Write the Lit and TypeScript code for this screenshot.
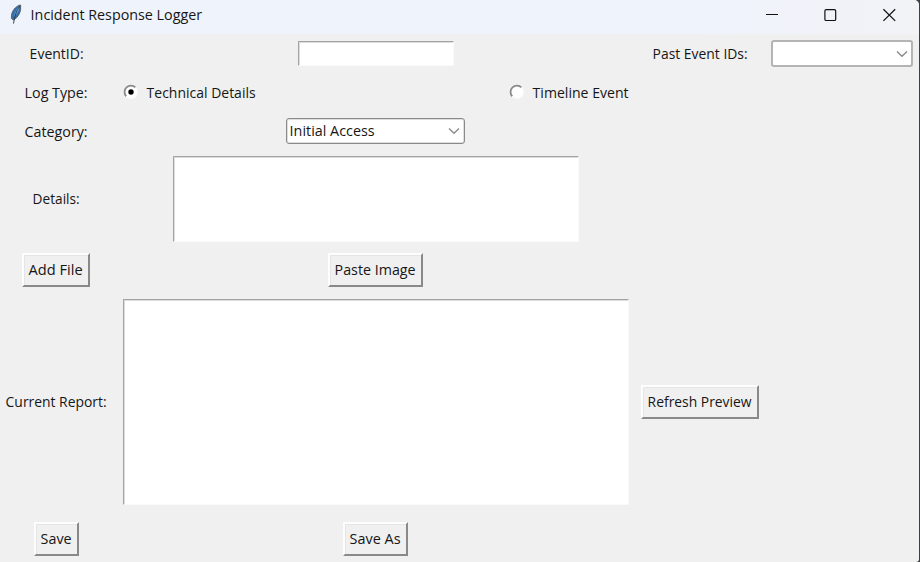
import { LitElement, html, css, svg } from "lit";
import { customElement, property } from "lit/decorators.js";

@customElement("fit-text")
class FitText extends LitElement {
  @property() text = "";
  @property({ type: Number }) width = 50;
  static styles = css`
    :host { display: inline-block; flex: none; font-size: 15.2px; }
    svg { display: block; height: 22px; overflow: visible; }
    text { font-family: "Open Sans", "Noto Sans", sans-serif; fill: #161616; }
  `;
  render() {
    return html`<svg width=${this.width} height="22">
      ${svg`<text x="-0.4" y="16" textLength=${this.width} lengthAdjust="spacingAndGlyphs">${this.text}</text>`}
    </svg>`;
  }
}

@customElement("tk-button")
class TkButton extends LitElement {
  @property() text = "";
  @property({ type: Number }) width = 50;
  static styles = css`
    :host { display: inline-block; }
    button {
      display: flex; align-items: center; justify-content: center;
      box-sizing: border-box; height: 34px; margin: 0 1px 0 0; padding: 0 5px;
      background: #f0f0f0; border: 2px solid; border-color: #fdfdfd #898989 #898989 #fdfdfd;
      box-shadow: inset 1px 1px #e5e5e5;
    }
  `;
  render() {
    return html`<button><fit-text .text=${this.text} .width=${this.width}></fit-text></button>`;
  }
}

@customElement("tk-combo")
class TkCombo extends LitElement {
  @property() text = "";
  static styles = css`
    :host { display: block; }
    .box {
      display: flex; align-items: center; justify-content: space-between;
      box-sizing: border-box; height: 27px; padding: 0 3px 0 2px;
      background: #fff; border: 2px solid #b4b4b4; border-radius: 3px;
    }
    .dark { height: 26px; border: 1px solid #8a8a8a; padding: 0 4px 0 3px; box-shadow: inset 0 0 0 1px #dedede; }
    .arrow { margin-left: auto; }
  `;
  render() {
    return html`<div class="box ${this.text ? "dark" : ""}">
      ${this.text ? html`<fit-text .text=${this.text} .width=${85}></fit-text>` : ""}
      <svg class="arrow" width="12" height="8" viewBox="0 0 12 8" fill="none" stroke="#8c8c8c" stroke-width="1.4"><path d="M1 1.5 6 6.3 11 1.5" /></svg>
    </div>`;
  }
}

@customElement("tk-radio")
class TkRadio extends LitElement {
  @property() text = "";
  @property({ type: Number }) width = 100;
  @property({ type: Boolean }) checked = false;
  static styles = css`
    :host { display: flex; align-items: center; gap: 8px; }
    .dial { display: block; margin-top: -2px; }
  `;
  render() {
    return html`<svg class="dial" width="16" height="16" viewBox="0 0 16 16" fill="none">
        <circle cx="8" cy="8" r="6.2" fill="#fff" />
        <path d="M3.3 12.3A6.2 6.2 0 0 1 12.5 3.5" stroke="#8a8a8a" stroke-width="1.8" />
        <path d="M12.5 3.5A6.3 6.3 0 0 1 3.3 12.3" stroke="#fcfcfc" stroke-width="1.4" />
        ${this.checked ? svg`<circle cx="8" cy="8" r="2.7" fill="#000" />` : ""}
      </svg><fit-text .text=${this.text} .width=${this.width}></fit-text>`;
  }
}

@customElement("app-root")
class AppRoot extends LitElement {
  static styles = css`
    :host { display: block; width: 920px; height: 562px; overflow: hidden; background: #3c3f43; }
    .window {
      box-sizing: border-box; width: 919px; height: 562px; overflow: hidden;
      background: #f0f0f0; border-radius: 0 5px 3px 0;
    }
    .title {
      display: flex; align-items: center; height: 34px; padding-left: 8px; box-sizing: border-box;
      background: linear-gradient(90deg, #eff3fb 75%, #f2f2f7);
    }
    .feather { display: block; margin: -6px 7px 0 0; }
    .name { margin-top: -4px; font-size: 14.8px; }
    .controls { display: block; margin: -4px 23px 0 auto; }
    .form {
      display: grid; grid-template-columns: 113px 526px 123px 160px;
      grid-template-rows: 39px 39px 39px 96px 46px 217px 58px;
      place-items: center;
    }
    .c1 { grid-column: 1; }
    .c2 { grid-column: 2; }
    .c3 { grid-column: 3; }
    .c4 { grid-column: 4; }
    .field {
      box-sizing: border-box; display: block; margin: 0; padding: 2px; resize: none; outline: 0;
      background: #fff; border: 1px solid; border-radius: 0;
      border-color: #a4a4a4 #fafafa #fafafa #a4a4a4;
      box-shadow: inset 1px 1px #dcdcdc;
    }
    .entry { width: 156px; height: 25px; }
    .details { width: 406px; height: 86px; }
    .report { width: 506px; height: 206px; }
    .past { width: 142px; }
    .category { width: 179px; margin: 0 1px 1px 0; }
    .radios { width: 506px; display: flex; justify-content: space-between; }
  `;
  private label(text: string, width: number, col = "c1") {
    return html`<fit-text class=${col} .text=${text} .width=${width}></fit-text>`;
  }
  private button(text: string, width: number, col: string) {
    return html`<tk-button class=${col} .text=${text} .width=${width}></tk-button>`;
  }
  render() {
    return html`<div class="window">
      <div class="title">
        <svg class="feather" width="16" height="22" viewBox="0 0 16 22">
          <path d="M12.6 2C9 2.6 5.2 6 3.8 10.8L3.3 15.3 5.3 17C9 15.4 12 11 12.6 6.5Z" fill="#3470b0" stroke="#59616b" stroke-width="1" />
          <path d="M11 3.6C8.5 6 7 9.3 6 13.5L9 10.5C10.6 8 11.5 6 11 3.6Z" fill="#69a9e5" />
          <path d="M11.8 3C8.6 7 6.6 13 5.5 20.6" fill="none" stroke="#2c3846" stroke-width=".9" />
        </svg>
        <fit-text class="name" text="Incident Response Logger" .width=${171.5}></fit-text>
        <svg class="controls" width="131" height="14" viewBox="0 0 131 14" fill="none" stroke="#111" stroke-width="1.2">
          <path d="M1 6.5H13" />
          <rect x="59.9" y="1.7" width="10.8" height="10.8" rx="1.3" />
          <path d="M118.4 1.2 130.2 12.9M130.2 1.2 118.4 12.9" />
        </svg>
      </div>
      <div class="form">
        ${this.label("EventID:", 54)}
        <input class="field entry c2" />
        ${this.label("Past Event IDs:", 95, "c3")}
        <tk-combo class="past c4"></tk-combo>

        ${this.label("Log Type:", 63)}
        <div class="radios c2">
          <tk-radio text="Technical Details" .width=${109} checked></tk-radio>
          <tk-radio text="Timeline Event" .width=${96}></tk-radio>
        </div>

        ${this.label("Category:", 63)}
        <tk-combo class="category c2" text="Initial Access"></tk-combo>

        ${this.label("Details:", 47)}
        <textarea class="field details c2"></textarea>

        ${this.button("Add File", 54, "c1")}
        ${this.button("Paste Image", 81, "c2")}

        ${this.label("Current Report:", 101)}
        <textarea class="field report c2"></textarea>
        ${this.button("Refresh Preview", 104, "c3")}

        ${this.button("Save", 31, "c1")}
        ${this.button("Save As", 51, "c2")}
      </div>
    </div>`;
  }
}
